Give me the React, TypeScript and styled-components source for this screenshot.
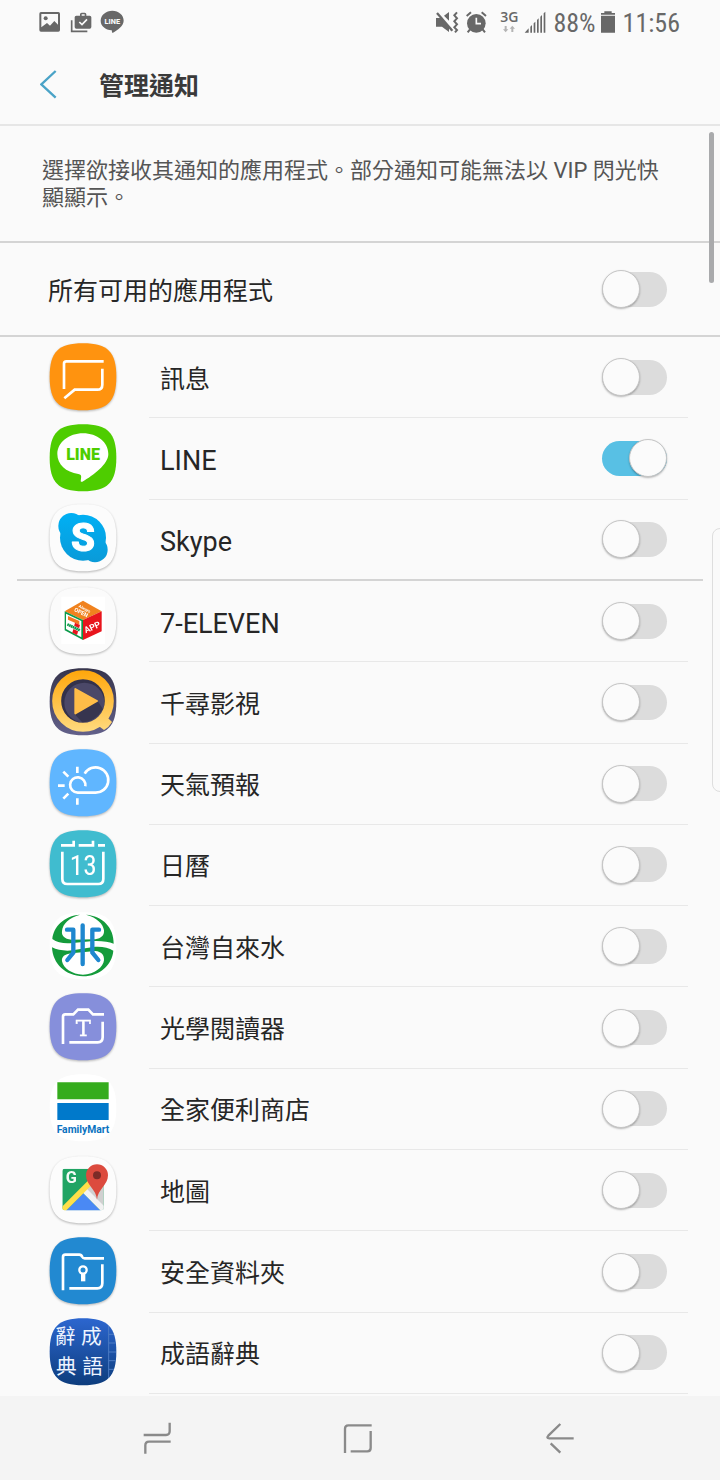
import React, { useState } from "react";
import styled, { createGlobalStyle } from "styled-components";

const color = {
  page: "#fafafa",
  text: "#262626",
  muted: "#555555",
  status: "#686868",
  accent: "#4aa3c7",
  on: "#58c0e4",
  off: "#dcdcdc",
  rule: "#d4d4d4",
  hairline: "#e8e8e8",
};

const GlobalStyle = createGlobalStyle`
  *, *::before { box-sizing: border-box; }
  body {
    margin: 0;
    background: ${color.page};
    color: ${color.text};
    font-family: Roboto, "Noto Sans CJK TC", sans-serif;
  }
`;

const Page = styled.div`
  position: relative;
  display: flex;
  flex-direction: column;
  min-height: 100vh;
  overflow: hidden;
`;

const StatusBar = styled.div`
  display: flex;
  align-items: center;
  justify-content: space-between;
  height: 44px;
  padding: 0 40px 0 38px;
  color: ${color.status};
`;

const StatusGroup = styled.div`
  display: flex;
  align-items: center;
  gap: 7px;
`;

const StatusCluster = styled.div`
  display: flex;
  align-items: center;
  gap: 5px;
`;

const StatusText = styled.span`
  padding-top: 2px;
  font-family: "Roboto Condensed", "Liberation Sans Narrow", Roboto, sans-serif;
  font-size: 26px;
  line-height: 32px;
`;

const Network = styled.span`
  display: flex;
  flex-direction: column;
  align-items: center;
  gap: 2px;
  width: 20px;
  margin: 0 0 0 7px;
  font: 600 14px/12px "Open Sans", sans-serif;
`;

const StatusSvg = styled.svg<{ $after?: number }>`
  display: block;
  flex: none;
  margin-right: ${(p) => p.$after ?? 0}px;
`;

const Header = styled.header`
  display: flex;
  align-items: center;
  height: 82px;
  padding: 0 40px;
  border-bottom: 2px solid #e6e6e6;
`;

const BackButton = styled.button`
  display: flex;
  width: 59px;
  padding: 0;
  border: 0;
  background: none;
  color: ${color.accent};
`;

const Title = styled.h1`
  margin: 0;
  padding-top: 5px;
  font-size: 25px;
  line-height: 36px;
  font-weight: 700;
  color: #3a3a3a;
`;

const Notice = styled.p`
  margin: 0;
  padding: 31px 42px 30px;
  border-bottom: 2px solid ${color.rule};
  font-size: 22px;
  line-height: 27px;
  color: ${color.muted};
`;

const AllRow = styled.label`
  display: flex;
  align-items: center;
  justify-content: space-between;
  height: 94px;
  padding: 0 53px 0 48px;
  border-bottom: 2px solid ${color.rule};
`;

const AppList = styled.ul`
  flex: 1;
  display: grid;
  grid-auto-rows: minmax(81px, 1fr);
  margin: 0;
  padding: 0 0 2px;
  list-style: none;
`;

const AppItem = styled.li<{ $groupEnd: boolean }>`
  display: flex;
  margin: 0 17px;
  border-bottom: ${(p) => (p.$groupEnd ? `2px solid ${color.rule}` : "0")};
`;

const AppLabel = styled.label`
  flex: 1;
  display: flex;
  align-items: center;
  padding: 0 15px 0 32px;
`;

const AppBody = styled.span<{ $line: boolean }>`
  flex: 1;
  align-self: stretch;
  display: flex;
  align-items: center;
  justify-content: space-between;
  margin-left: 32px;
  padding: 0 21px 0 11px;
  border-bottom: ${(p) => (p.$line ? `1px solid ${color.hairline}` : "0")};
`;

const Name = styled.span<{ $latin?: boolean }>`
  padding-top: 5px;
  font-size: ${(p) => (p.$latin ? 27 : 25)}px;
  line-height: 36px;
`;

const Switch = styled.input.attrs({ type: "checkbox", role: "switch" })`
  appearance: none;
  flex: none;
  display: flex;
  align-items: center;
  width: 65px;
  height: 35px;
  margin: 0;
  border-radius: 18px;
  background: ${color.off};

  &::before {
    content: "";
    flex: none;
    width: 38px;
    height: 38px;
    border: 1px solid #c6c6c6;
    border-radius: 50%;
    background: #fbfbfb;
    box-shadow: 0 1px 2px rgba(0, 0, 0, 0.28);
  }

  &:checked {
    justify-content: flex-end;
    background: ${color.on};
  }
`;

const NavBar = styled.nav`
  display: grid;
  grid-template-columns: repeat(3, 1fr);
  height: 84px;
  padding: 0 59px 0 56px;
  background: #f4f4f4;
`;

const NavButton = styled.button`
  display: flex;
  align-items: center;
  justify-content: center;
  padding: 0;
  border: 0;
  background: none;
  color: #8a8a8a;
`;

const ScrollThumb = styled.div`
  position: absolute;
  top: 132px;
  right: 6px;
  width: 5px;
  height: 151px;
  border-radius: 3px;
  background: #a9aaac;
`;

const EdgeHandle = styled.div`
  position: absolute;
  top: 528px;
  right: -8px;
  width: 16px;
  height: 264px;
  border: 1px solid #dedede;
  border-radius: 12px;
  background: ${color.page};
`;

const IconSvg = styled.svg<{ $shadow: boolean }>`
  display: block;
  flex: none;
  overflow: visible;
  filter: ${(p) => (p.$shadow ? "drop-shadow(0 1px 1px rgba(0,0,0,0.28))" : "none")};
`;

const SQUIRCLE =
  "M102 -1C176 -1 202 25 202 99.500C202 174 176 200 102 200C28 200 2 174 2 99.500C2 25 28 -1 102 -1Z";

type TileProps = {
  fill: string;
  top: number;
  shadow?: boolean;
  defs?: React.ReactNode;
  children: React.ReactNode;
};

function Tile({ fill, top, shadow = true, defs, children }: TileProps) {
  return (
    <IconSvg $shadow={shadow} width="68" height="68" viewBox="0 1 204 204" aria-hidden="true">
      <defs>{defs}</defs>
      <path d={SQUIRCLE} fill={fill} />
      <g transform={`translate(-57 ${-top})`}>{children}</g>
    </IconSvg>
  );
}

const line = { fill: "none", stroke: "#fff", strokeWidth: 8 };

const MessageIcon = () => (
  <Tile fill="#ff930f" top={24}>
    <path {...line} d="M102 160V84Q102 77 109 77H221M217 99V147Q217 162 202 162H134L103 188" />
  </Tile>
);

const LineIcon = () => (
  <Tile fill="#4ecd00" top={268} shadow={false}>
    <path
      fill="#fff"
      d="M159 294C202 294 235 321 235 356C235 387 190 420 157 439C151 441 152 436 153 430C155 420 152 417 145 416C108 411 82 387 82 356C82 321 117 294 159 294Z"
    />
    <text x="159" y="373" textAnchor="middle" fontSize="48" fontWeight="900" fontFamily="Roboto" fill="#4ecd00">LINE</text>
  </Tile>
);

const SkypeIcon = () => (
  <Tile
    fill="#fcfcfc"
    top={512}
    defs={
      <linearGradient id="skype" gradientUnits="userSpaceOnUse" x1="0" y1="537" x2="0" y2="686">
        <stop offset="0" stopColor="#00b0f4" />
        <stop offset="1" stopColor="#0a9ad8" />
      </linearGradient>
    }
  >
    <g fill="url(#skype)">
      <circle cx="159" cy="611" r="69" />
      <circle cx="124" cy="576" r="39" />
      <circle cx="195" cy="647" r="38" />
    </g>
    <text
      x="159"
      y="652"
      textAnchor="middle"
      fontSize="116"
      fontWeight="800"
      fontFamily="Roboto"
      fill="#fff"
      stroke="#fff"
      strokeWidth="3"
      strokeLinejoin="round"
    >
      S
    </text>
  </Tile>
);

const SevenIcon = () => (
  <Tile fill="#fbfbfb" top={21}>
    <path fill="#fff" d="M94 48h131v142H94z" />
    <path fill="#f0821e" d="M159 60L215 92L159 118L104 92Z" />
    <path fill="#0b9a4a" d="M104 92L159 118V178L104 149Z" />
    <path fill="#e8151d" d="M159 118L215 92V152L159 178Z" />
    <path fill="#fff" d="M108 99L154 121V170L108 145Z" />
    <path fill="#f47920" d="M114 106L148 121V132L114 117Z" />
    <path fill="#e8151d" d="M135 126L150 133L141 163L127 156Z" />
    <path fill="#fff" d="M110 125L151 144V155L110 136Z" />
    <path fill="none" stroke="#0b9a4a" strokeWidth="8" strokeDasharray="5 1" d="M112 131L150 149" />
    <g fill="#fff" fontFamily="Roboto" fontWeight="700">
      <text x="167" y="158" fontSize="26" transform="rotate(-24 167 158)">APP</text>
      <text x="131" y="91" fontSize="17" transform="rotate(26 131 91)">OPEN</text>
      <text x="145" y="79" fontSize="12" transform="rotate(28 145 79)">Always</text>
    </g>
  </Tile>
);

const VideoIcon = () => (
  <Tile
    fill="url(#videoBg)"
    top={265}
    shadow={false}
    defs={
      <>
        <linearGradient id="videoBg" x1="0" y1="0" x2="0" y2="1">
          <stop offset="0" stopColor="#36344c" />
          <stop offset="1" stopColor="#62608a" />
        </linearGradient>
        <linearGradient id="videoRing" gradientUnits="userSpaceOnUse" x1="0" y1="268" x2="0" y2="456">
          <stop offset="0" stopColor="#ffa60a" />
          <stop offset="1" stopColor="#ffdb80" />
        </linearGradient>
      </>
    }
  >
    <circle cx="159" cy="362" r="67" fill="#33314b" />
    <circle cx="163" cy="367" r="60" fill="#4b4868" />
    <path fill="#37354f" d="M134 402L158 427Q195 424 219 387L203 362Z" />
    <circle cx="159" cy="362" r="79" fill="none" stroke="url(#videoRing)" strokeWidth="27" />
    <path fill="url(#videoRing)" d="M205 436L222 449Q238 440 246 425L233 412Z" />
    <path
      fill="#ffbd48"
      stroke="#ffbd48"
      strokeWidth="6"
      strokeLinejoin="round"
      d="M136 326L201 362L136 399Z"
    />
  </Tile>
);

const WeatherIcon = () => (
  <Tile fill="#60b6ff" top={509}>
    <path {...line} d="M164 581A38 38 0 1 1 196 638H143A23 23 0 1 1 166 619" />
    <path {...line} d="M142 560V579M100 575L115 590M84 617H104M100 656L115 641M142 655V674" />
  </Tile>
);

const CalendarIcon = () => (
  <Tile fill="#40bccf" top={33}>
    <path {...line} d="M93 77H131V63M146 77H189V63M204 77H225" />
    <path {...line} d="M97 96V178Q97 193 112 193H205Q220 193 220 178V96" />
    <text
      x="160"
      y="165"
      textAnchor="middle"
      fontSize="82"
      fontWeight="400"
      fontFamily="Roboto Condensed, Roboto"
      fill="#fff"
    >
      13
    </text>
  </Tile>
);

const WaterIcon = () => (
  <Tile fill="#fff" top={277} shadow={false}>
    <g fill="#149b3b">
      <path d="M150 283C102 286 70 320 67 356C82 367 104 371 128 368L190 362C215 361 236 364 251 370C252 322 218 286 168 283C202 292 220 312 222 330C223 346 214 354 196 357L124 358C103 356 94 346 96 332C98 310 118 291 150 283Z" />
      <path d="M66 381C82 389 104 393 128 390L190 380C212 377 236 382 250 391C246 434 210 467 159 468C106 467 68 430 66 381ZM196 392L124 399C104 402 94 409 96 423C100 443 126 463 159 463C194 462 220 440 222 420C223 403 214 394 196 392Z" />
    </g>
    <path
      fill="none"
      stroke="#1e87cf"
      strokeWidth="13"
      strokeLinecap="round"
      strokeLinejoin="round"
      d="M158 315V431M111 328H130V397L112 419M207 328H187V397L205 419"
    />
  </Tile>
);

const ReaderIcon = () => (
  <Tile fill="#868fdb" top={521}>
    <path {...line} d="M99 672V590Q99 583 106 583H130L144 569H175L189 583H222M218 605V652Q218 667 203 667H118" />
    <text
      x="160"
      y="649"
      textAnchor="middle"
      fontSize="68"
      fontFamily="DejaVu Serif"
      fill="#fff"
      stroke="#fff"
      strokeWidth="1"
    >
      T
    </text>
  </Tile>
);

const FamilyMartIcon = () => (
  <Tile fill="#fff" top={29} shadow={false}>
    <path fill="#35ac1d" d="M82 52h154v51H82z" />
    <path fill="#0079cb" d="M82 114h154v51H82z" />
    <text x="159" y="203" textAnchor="middle" fontSize="31" fontWeight="700" fontFamily="Roboto" fill="#0a72c0">FamilyMart</text>
  </Tile>
);

const MapsIcon = () => (
  <Tile
    fill="#fcfcfc"
    top={274}
    defs={
      <clipPath id="mapSheet">
        <rect x="97" y="310" width="124" height="125" rx="7" />
      </clipPath>
    }
  >
    <g clipPath="url(#mapSheet)">
      <path fill="#20a464" d="M97 310h124v125H97z" />
      <path fill="#d0d0d0" d="M221 322V435L160 374Z" />
      <path fill="#4a89f4" d="M104 440L160 384L216 440Z" />
      <path fill="none" stroke="#f2f2f2" strokeWidth="17" d="M160 372L228 440" />
      <path fill="none" stroke="#ffdf49" strokeWidth="17" d="M92 440L200 332" />
    </g>
    <path fill="#dc4b3e" d="M201 403C199 372 168 360 168 330A33 33 0 0 1 234 330C234 360 203 372 201 403Z" />
    <circle cx="201" cy="330" r="12" fill="#7c2b27" />
    <text x="124" y="354" textAnchor="middle" fontSize="49" fontWeight="700" fontFamily="Roboto" fill="#f4fbf7">G</text>
  </Tile>
);

const FolderIcon = () => (
  <Tile fill="#2289d1" top={22}>
    <path {...line} d="M99 180V80Q99 73 106 73H148Q154 73 157 80Q159 84 164 84H222M217 102V159Q217 174 202 174H118" />
    <circle cx="159" cy="119" r="11" fill="none" stroke="#fff" strokeWidth="7" />
    <path fill="#fff" d="M153 128h13v25h-13z" />
  </Tile>
);

const IdiomIcon = () => (
  <Tile
    fill="url(#idiom)"
    top={266}
    shadow={false}
    defs={
      <linearGradient id="idiom" x1="0" y1="0" x2="0" y2="1">
        <stop offset="0" stopColor="#2c66cf" />
        <stop offset="1" stopColor="#0d3d7d" />
      </linearGradient>
    }
  >
    <path
      fill="none"
      stroke="#4d7cc4"
      strokeWidth="3"
      d="M236 288V444M236 313H252M236 339H257M236 366H258M236 392H257M236 418H252"
    />
    <g fontFamily="Noto Sans CJK TC" fontSize="62" fill="#edf4ff">
      <text x="75" y="342">辭</text>
      <text x="153" y="342">成</text>
      <text x="78" y="432">典</text>
      <text x="157" y="432">語</text>
    </g>
  </Tile>
);

type AppEntry = {
  name: string;
  Icon: () => React.ReactElement;
  groupEnd?: boolean;
  latin?: boolean;
};

const apps: AppEntry[] = [
  { name: "訊息", Icon: MessageIcon },
  { name: "LINE", Icon: LineIcon, latin: true },
  { name: "Skype", Icon: SkypeIcon, latin: true, groupEnd: true },
  { name: "7-ELEVEN", Icon: SevenIcon, latin: true },
  { name: "千尋影視", Icon: VideoIcon },
  { name: "天氣預報", Icon: WeatherIcon },
  { name: "日曆", Icon: CalendarIcon },
  { name: "台灣自來水", Icon: WaterIcon },
  { name: "光學閱讀器", Icon: ReaderIcon },
  { name: "全家便利商店", Icon: FamilyMartIcon },
  { name: "地圖", Icon: MapsIcon },
  { name: "安全資料夾", Icon: FolderIcon },
  { name: "成語辭典", Icon: IdiomIcon },
];

function NotificationIcons() {
  return (
    <StatusGroup>
      <StatusSvg width="24" height="24" viewBox="114 29 72 72" aria-hidden="true">
        <path
          fill="currentColor"
          fillRule="evenodd"
          d="M123 35H175Q180 35 180 40V89Q180 94 175 94H123Q118 94 118 89V40Q118 35 123 35ZM124 41V81L141 68L150 76L163 62L174 73V41Z"
        />
        <circle cx="137" cy="54" r="6" fill="currentColor" />
      </StatusSvg>
      <StatusSvg width="24" height="24" viewBox="207 29 72 72" aria-hidden="true">
        <path fill="none" stroke="currentColor" strokeWidth="5" d="M215 60V93H262" />
        <path
          fill="currentColor"
          fillRule="evenodd"
          d="M229 46H240V42Q240 37 245 37H254Q259 37 259 42V46H269Q274 46 274 51V80Q274 85 269 85H229Q224 85 224 80V51Q224 46 229 46ZM245 46H254V42H245Z"
        />
        <path fill="none" stroke={color.page} strokeWidth="5" d="M238 65L246 73L261 57" />
      </StatusSvg>
      <StatusSvg width="24" height="24" viewBox="300 29 72 72" aria-hidden="true">
        <path
          fill="currentColor"
          d="M337 31C356 31 371 44 371 61C371 76 352 90 339 97C334 99 337 92 335 90C316 88 302 77 302 61C302 44 318 31 337 31Z"
        />
        <text x="337" y="70" textAnchor="middle" fontSize="22" fontWeight="800" fontFamily="Roboto" fill={color.page}>LINE</text>
      </StatusSvg>
    </StatusGroup>
  );
}

function SystemIcons() {
  return (
    <StatusCluster>
      <StatusSvg $after={2} width="24" height="24" viewBox="48 29 72 72" aria-hidden="true">
        <path fill="currentColor" d="M51 53H67L90 77V95L69 79H51ZM75 46L90 35V61Z" />
        <path fill="none" stroke="currentColor" strokeWidth="7" d="M54 38L100 91" />
        <path
          fill="none"
          stroke="currentColor"
          strokeWidth="6"
          d="M114 36L106 45L114 54L106 63L114 72L106 81L114 89L108 96"
        />
      </StatusSvg>
      <StatusSvg width="21" height="24" viewBox="139 29 63 72" aria-hidden="true">
        <circle cx="170" cy="69" r="28" fill="currentColor" />
        <path fill="none" stroke="currentColor" strokeWidth="6" d="M141 47L154 36M186 36L199 47M151 87L144 96M189 87L196 96" />
        <path fill="none" stroke={color.page} strokeWidth="5" d="M170 52V70H184" />
      </StatusSvg>
      <Network>
        3G
        <StatusSvg width="12" height="8" viewBox="0 0 36 24" aria-hidden="true">
          <path fill="#b4b4b4" d="M5 3H11V13H16L8 22L0 13H5ZM25 21H31V11H36L28 2L20 11H25Z" />
        </StatusSvg>
      </Network>
      <StatusSvg $after={2} width="22" height="24" viewBox="314 29 66 72" aria-hidden="true">
        <path
          fill="currentColor"
          d="M316 97L328 84V97ZM333 79L338 74V97H333ZM343 69L348 64V97H343ZM353 59L358 54V97H353ZM363 49L368 44V97H363ZM373 39L378 34V97H373Z"
        />
      </StatusSvg>
      <StatusText>88%</StatusText>
      <StatusSvg $after={3} width="14" height="24" viewBox="544 29 42 72" aria-hidden="true">
        <path fill="currentColor" d="M554 33H576V38H586V43H544V38H554ZM544 46H586V97H544Z" />
      </StatusSvg>
      <StatusText>11:56</StatusText>
    </StatusCluster>
  );
}

const navItems = [
  {
    label: "最近使用",
    box: "109 100 120 120",
    d: "M129 151H196Q207 151 207 140V114M134 207V182Q134 171 145 171H210",
  },
  {
    label: "主畫面",
    box: "715 100 120 120",
    d: "M736 205V132Q736 122 746 122H816M813 139V190Q813 200 803 200H753",
  },
  {
    label: "返回",
    box: "1320 100 120 120",
    d: "M1381 118L1345 153Q1338 161 1348 161H1421M1352 176L1381 204",
  },
];

export default function App() {
  const [enabled, setEnabled] = useState<string[]>(["LINE"]);
  const all = enabled.length === apps.length;
  const toggle = (name: string) =>
    setEnabled((list) => (list.includes(name) ? list.filter((n) => n !== name) : [...list, name]));

  return (
    <Page>
      <GlobalStyle />
      <StatusBar>
        <NotificationIcons />
        <SystemIcons />
      </StatusBar>
      <Header>
        <BackButton type="button" aria-label="返回">
          <svg width="17" height="29" viewBox="0 0 51 87" aria-hidden="true">
            <path fill="none" stroke="currentColor" strokeWidth="7" d="M47 3L4 43L47 83" />
          </svg>
        </BackButton>
        <Title>管理通知</Title>
      </Header>
      <Notice>選擇欲接收其通知的應用程式。部分通知可能無法以 VIP 閃光快顯顯示。</Notice>
      <AllRow>
        <Name>所有可用的應用程式</Name>
        <Switch checked={all} onChange={() => setEnabled(all ? [] : apps.map((a) => a.name))} />
      </AllRow>
      <AppList>
        {apps.map(({ name, Icon, latin, groupEnd = false }) => (
          <AppItem key={name} $groupEnd={groupEnd}>
            <AppLabel>
              <Icon />
              <AppBody $line={!groupEnd}>
                <Name $latin={latin}>{name}</Name>
                <Switch checked={enabled.includes(name)} onChange={() => toggle(name)} />
              </AppBody>
            </AppLabel>
          </AppItem>
        ))}
      </AppList>
      <NavBar>
        {navItems.map((item) => (
          <NavButton key={item.label} type="button" aria-label={item.label}>
            <svg width="40" height="40" viewBox={item.box} aria-hidden="true">
              <path fill="none" stroke="currentColor" strokeWidth="7" d={item.d} />
            </svg>
          </NavButton>
        ))}
      </NavBar>
      <ScrollThumb />
      <EdgeHandle />
    </Page>
  );
}
